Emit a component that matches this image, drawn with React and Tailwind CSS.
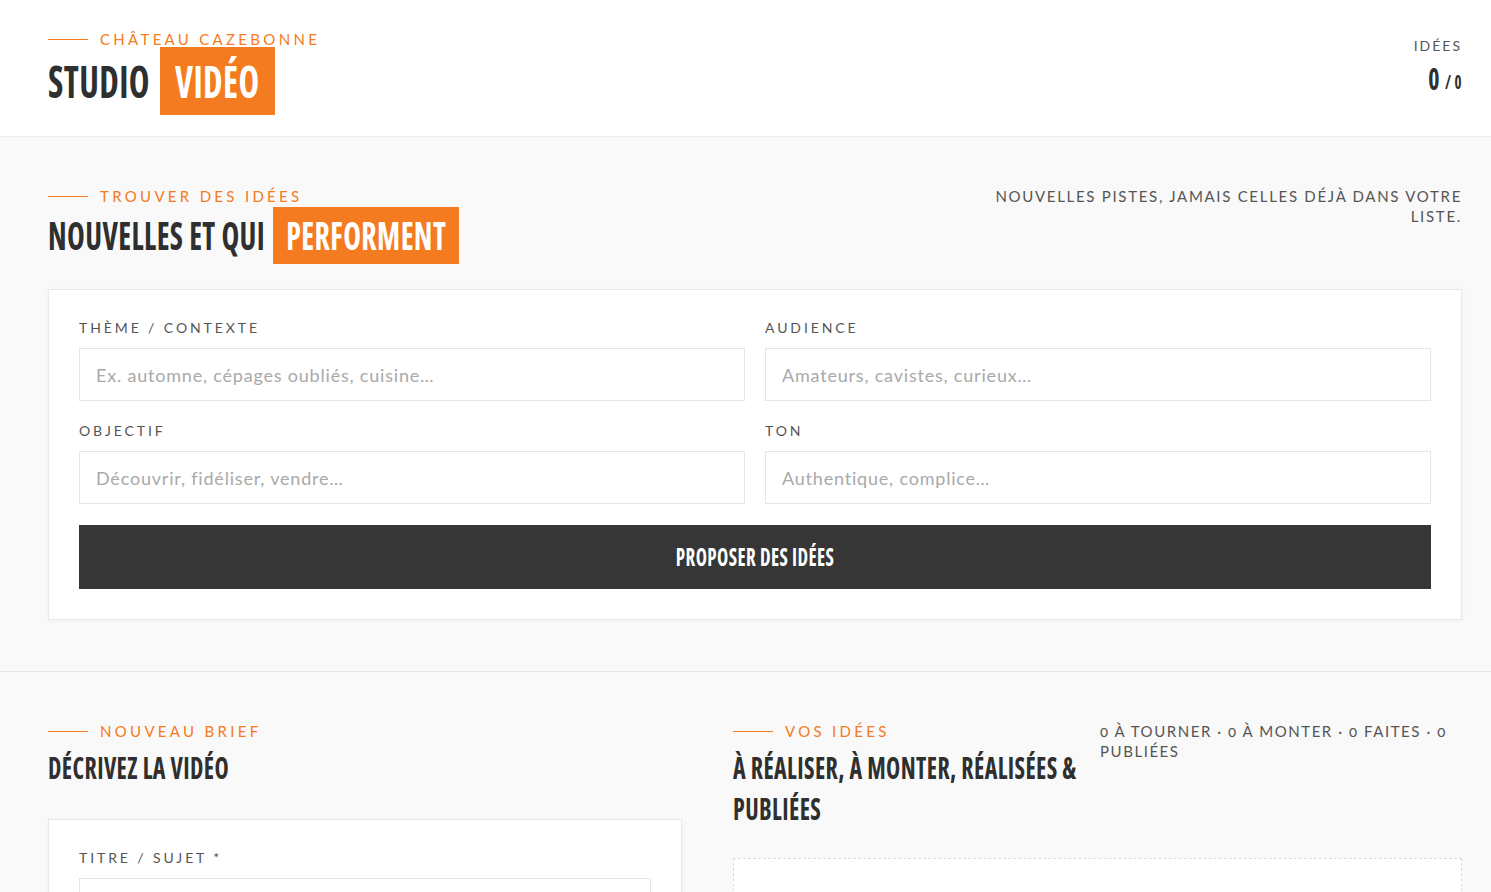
import React from "react";

const HEAD =
  "font-['Open_Sans',sans-serif] font-stretch-condensed font-bold uppercase tracking-[0.4px]";

function Tall({ children, className = "" }) {
  return <span className={`inline-block origin-center scale-y-[1.28] ${className}`}>{children}</span>;
}

function Eyebrow({ children }) {
  return (
    <div className="flex items-center gap-3 h-4">
      <span className="block w-10 h-px bg-[#f47b20]" />
      <span className="text-[15px] leading-4 tracking-[3.3px] text-[#f47b20] uppercase">
        {children}
      </span>
    </div>
  );
}

function Field({ label, placeholder }) {
  return (
    <div className="flex flex-col">
      <label className="text-[14px] leading-[18px] tracking-[2.9px] text-[#555] uppercase">
        {label}
      </label>
      <input
        className="mt-[11px] h-[53px] w-full border border-[#e6e6e6] bg-white px-4 text-[18px] tracking-[0.8px] text-[#333] outline-none placeholder:text-[#a9a9a9]"
        placeholder={placeholder}
      />
    </div>
  );
}

export default function App() {
  return (
    <div className="h-screen overflow-hidden bg-[#f9f9f9] font-['Lato',sans-serif] text-[#333]">
      {/* HEADER */}
      <header className="bg-white border-b border-[#ececec] pl-12 pr-[29px] pt-[31px] pb-[21px] flex justify-between items-start">
        <div>
          <Eyebrow>Château Cazebonne</Eyebrow>
          <div className="flex items-center">
            <h1 className={`${HEAD} text-[35px] leading-[68px] text-[#2f2f2f]`}>
              <Tall>Studio</Tall>
            </h1>
            <span className={`${HEAD} ml-[10px] h-[68px] bg-[#f47b20] px-[15px] text-[35px] leading-[68px] text-white`}>
              <Tall>Vidéo</Tall>
            </span>
          </div>
        </div>
        <div className="text-right">
          <div className="text-[14px] tracking-[2px] text-[#555] leading-[18px] mt-[6px]">IDÉES</div>
          <div className={`${HEAD} mt-[6px] text-[#2f2f2f] leading-[34px]`}>
            <Tall className="text-[24px]">0</Tall>
            <Tall className="text-[15px] ml-[5px]">/ 0</Tall>
          </div>
        </div>
      </header>

      {/* TROUVER DES IDEES */}
      <section className="border-b border-[#e8e8e8] pl-12 pr-[29px] pt-[51px] pb-[51px]">
        <div className="flex justify-between items-start">
          <div>
            <Eyebrow>Trouver des idées</Eyebrow>
            <div className="flex items-center mt-[3px]">
              <h2 className={`${HEAD} text-[30px] leading-[57px] text-[#2f2f2f]`}>
                <Tall>Nouvelles et qui</Tall>
              </h2>
              <span className={`${HEAD} ml-2 h-[57px] bg-[#f47b20] px-[13px] text-[30px] leading-[57px] text-white`}>
                <Tall>Performent</Tall>
              </span>
            </div>
          </div>
          <p className="w-[490px] text-right text-[15px] leading-5 tracking-[1.7px] text-[#555] uppercase mt-[-2px]">
            Nouvelles pistes, jamais celles déjà dans votre liste.
          </p>
        </div>

        <div className="mt-[25px] bg-white border border-[#e8e8e8] shadow-[0_1px_4px_rgba(0,0,0,0.04)] px-[30px] pt-[29px] pb-[30px]">
          <div className="grid grid-cols-2 gap-x-5 gap-y-[21px]">
            <Field label="Thème / Contexte" placeholder="Ex. automne, cépages oubliés, cuisine…" />
            <Field label="Audience" placeholder="Amateurs, cavistes, curieux…" />
            <Field label="Objectif" placeholder="Découvrir, fidéliser, vendre…" />
            <Field label="Ton" placeholder="Authentique, complice…" />
          </div>
          <button className={`${HEAD} mt-[21px] w-full h-16 bg-[#363636] text-white text-[19px]`}>
            <Tall>Proposer des idées</Tall>
          </button>
        </div>
      </section>

      {/* BRIEF + IDEES */}
      <section className="pl-12 pr-[29px] pt-[51px] grid grid-cols-[634fr_729fr] gap-[51px]">
        <div>
          <Eyebrow>Nouveau brief</Eyebrow>
          <h2 className={`${HEAD} mt-[8px] text-[24px] leading-10 text-[#2f2f2f]`}>
            <Tall>Décrivez la vidéo</Tall>
          </h2>
          <div className="mt-[32px] bg-white border border-[#e8e8e8] shadow-[0_1px_4px_rgba(0,0,0,0.04)] px-[30px] pt-[29px] pb-[30px]">
            <label className="block text-[14px] leading-[18px] tracking-[2.9px] text-[#555] uppercase">
              Titre / Sujet <span className="text-[#555]">*</span>
            </label>
            <input className="mt-[11px] h-[53px] w-full border border-[#e6e6e6] bg-white px-4 text-[18px] outline-none" />
            <div className="h-40" />
          </div>
        </div>

        <div>
          <div className="flex items-start gap-3">
            <div className="w-[355px] shrink-0">
              <Eyebrow>Vos idées</Eyebrow>
              <h2
                className={`${HEAD} mt-[8px] mb-[16px] text-[24px] leading-[32px] text-[#2f2f2f] origin-top scale-y-[1.28]`}
              >
                À réaliser, à monter, réalisées &amp; publiées
              </h2>
            </div>
            <p className="flex-1 text-[15px] leading-5 tracking-[1.55px] text-[#555] uppercase mt-[-2px] oldstyle-nums">
              0 à tourner · 0 à monter · 0 faites · 0 publiées
            </p>
          </div>
          <div className="mt-[31px] h-60 bg-white border border-dashed border-[#dcdcdc]" />
        </div>
      </section>
    </div>
  );
}
